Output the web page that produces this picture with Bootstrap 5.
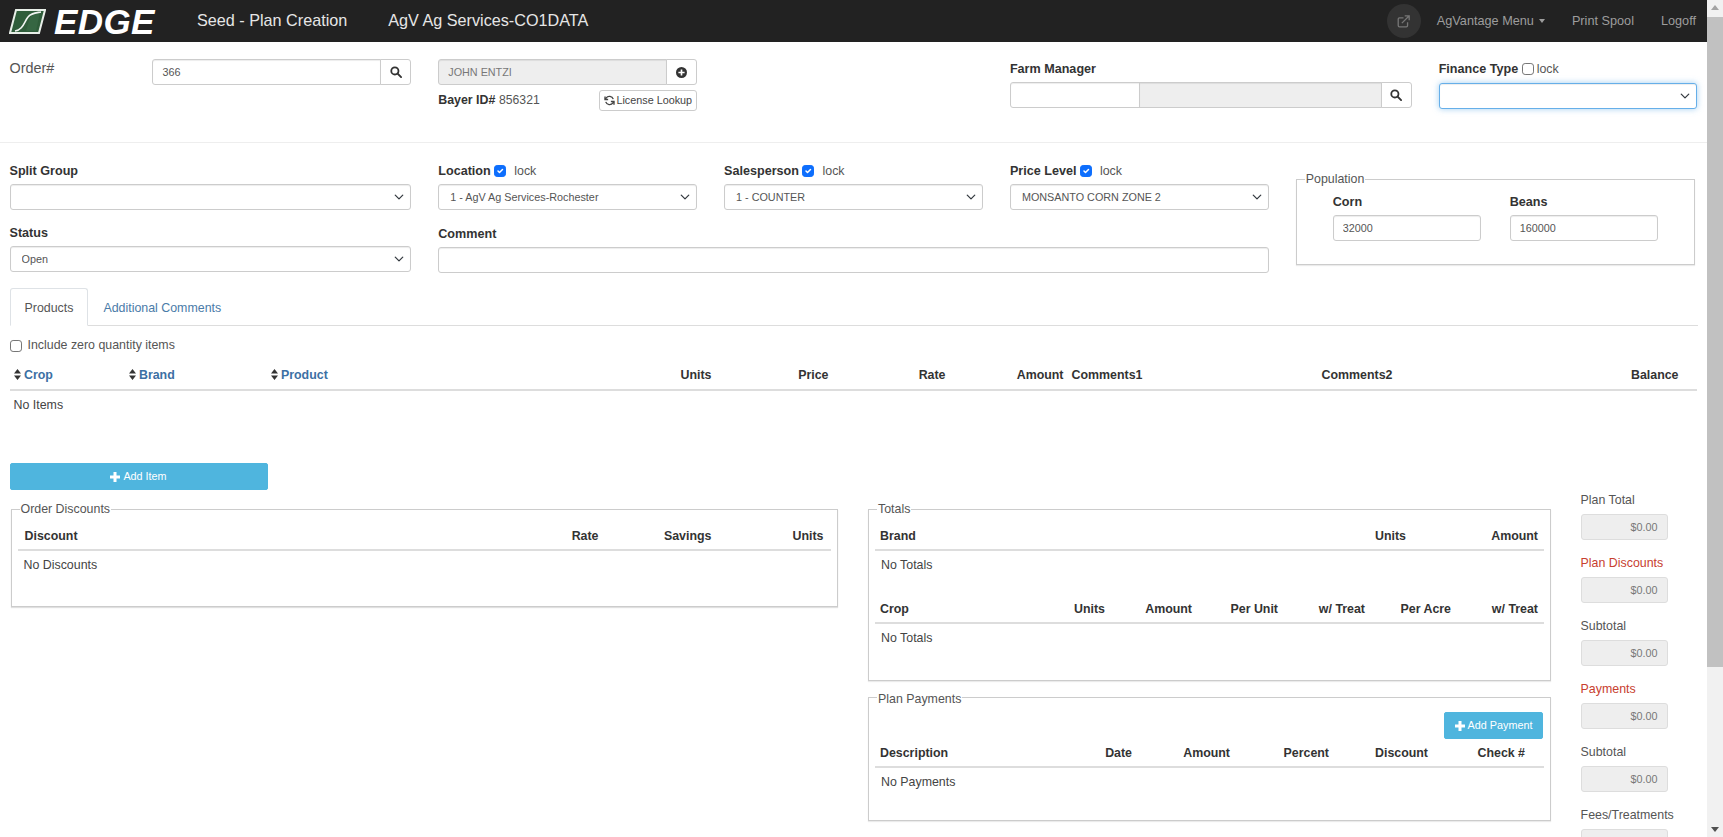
<!DOCTYPE html>
<html lang="en">
<head>
<meta charset="utf-8">
<title>Seed - Plan Creation</title>
<link rel="stylesheet" href="https://cdn.jsdelivr.net/npm/bootstrap@5.3.0/dist/css/bootstrap.min.css">
<style>
html,body{height:100%;overflow:hidden;background:#fff}
body{font-family:"Liberation Sans",Arial,sans-serif;font-size:13px;color:#333;line-height:1.3}
.shell{width:1707px;height:837px;overflow:hidden}
.topbar{height:42px;background:#222;padding:0 11px 0 9px;flex-wrap:nowrap}
.brandmark{display:flex;align-items:center;gap:8px;width:188px;padding:0;margin:0;text-decoration:none}
.brandword{font-size:35px;font-weight:700;font-style:italic;color:#fff;line-height:1;letter-spacing:.4px}
.pagetitle{font-size:16.2px;color:#e6e6e6;margin-right:41px;white-space:nowrap}
.toplink{font-size:12.7px;color:#9d9d9d;text-decoration:none;margin-left:27px;white-space:nowrap}
.toplink.first{margin-left:16px}
.extcircle{width:34px;height:34px;border-radius:50%;background:#333;display:flex;align-items:center;justify-content:center}
.caretdown{display:inline-block;width:0;height:0;border-left:3.5px solid transparent;border-right:3.5px solid transparent;border-top:4px solid #9d9d9d;margin-left:5px;vertical-align:2px}
.fakebar{position:fixed;top:0;right:0;width:16px;height:837px;background:#f1f1f1}
.fakethumb{position:absolute;top:17px;left:0;width:16px;height:650px;background:#c1c1c1}
.arrowup,.arrowdown{position:absolute;left:4px;width:0;height:0;border-left:4px solid transparent;border-right:4px solid transparent}
.arrowup{top:5px;border-bottom:5px solid #a3a3a3}
.arrowdown{bottom:5px;border-top:5px solid #505050}
.pagebody{padding:0 9.5px}
.pagebody .row{--bs-gutter-x:27px}
.blockone{height:101px;border-bottom:1px solid #eee}
.ordertag{font-size:14.4px;color:#555;margin-top:17px;line-height:18px}
.pad17{padding-top:17px}
.pad19{padding-top:19px}
.fieldname{font-weight:700;font-size:12.6px;color:#333;line-height:16px;height:16px;margin-bottom:5px;white-space:nowrap}
.fieldname .form-check-input{margin:0 3px 0 0;width:12px;height:12px;vertical-align:-2px}
.form-check-input:not(:checked){border-color:#767676}
.locktxt{font-weight:400;font-size:12.4px;color:#555;margin-left:5px}
.finance{padding-top:19px}
.finance .fieldname{margin-bottom:6px}
.form-control.fc,.form-select.fc,.btn.fb{font-size:10.8px;height:26px;min-height:26px;line-height:14px;padding:4px 9px;border-radius:3px;border-color:#ccc;color:#555;box-shadow:inset 0 1px 1px rgba(0,0,0,.075)}
.form-select.fc{padding-left:11px;background-position:right 5px center;background-size:12px 10px;color:#555}
.form-control.fc[readonly]{background:#eee;color:#777}
.btn.fb{width:31px;padding:0;display:flex;align-items:center;justify-content:center;background:#fff;box-shadow:none}
.form-select.focusring{border-color:#66afe9;box-shadow:inset 0 1px 1px rgba(0,0,0,.075),0 0 6px rgba(102,175,233,.6)}
.bayerline{display:flex;justify-content:space-between;align-items:center;margin-top:5px;height:21px}
.bayerline b{font-size:12.4px}
.bayerline span{font-size:12.2px;color:#555}
.btn.lookup{font-size:10.8px;height:21px;padding:0 4px;line-height:19px;border-color:#ccc;color:#444;border-radius:3px;display:flex;align-items:center;gap:1px;background:#fff}
.farmfix{width:130px;flex:0 0 130px!important}
.blocktwo{padding-top:20px;height:145px}
.gap16{margin-top:15px}
.gap17{margin-top:16px}
.fldbox{border:1px solid #ccc;margin:0;padding:0;position:relative;min-width:0}
.fldbox>legend{position:absolute;float:none;top:-8px;left:8px;width:auto;margin:0;padding:0 1px;font-size:12.4px;line-height:15px;background:#fff;color:#555}
.popbox{height:86px;margin-top:16px;display:flex;padding:0 36px 0 36px;gap:29px;box-shadow:0 1px 1px rgba(0,0,0,.08);width:399px}
.popfield{width:148px;padding-top:14px}
.popfield .fieldname{margin-bottom:5px}
.tabset{height:38px;border-bottom-color:#ddd;margin-top:0}
.tabset .nav-link{font-size:12.4px;padding:11px 14px 9px;height:37px;line-height:16px;color:#4a7ba8;border-radius:3px 3px 0 0}
.tabset .nav-link.active{color:#555;height:38px}
.zeroline{display:flex;align-items:center;gap:6px;height:17px;margin-top:11px;font-size:12.4px;color:#555}
.zeroline .form-check-input{margin:0;width:12px;height:12px}
.flexhead{display:flex;border-bottom:2px solid #ddd;font-weight:700;font-size:12.4px;height:24px;color:#333;line-height:16px;padding-left:4px;white-space:nowrap;position:relative}
.prodtable{margin-top:13px;width:1687px}
.sorter{color:#3c70a4}
.sorter svg{margin-right:0;vertical-align:-1px}
.abscell{position:absolute;top:0}
.emptyrow{font-size:12.4px;color:#444;padding:6px 4px;line-height:16px}
.emptyrow.insetrow{padding-left:6px;padding-right:6px}
.btn.addbtn{display:flex;align-items:center;justify-content:center;gap:3px;background:#4fb5de;border:1px solid #4fb5de;color:#fff;font-size:10.8px;border-radius:2px;padding:0;height:27px}
.additem{width:258px;margin-top:44px}
.blockthree{margin-top:19px}
.discbox{height:98px;width:827px;margin-left:1px;box-shadow:0 1px 1px rgba(0,0,0,.12);padding:18px 6px 0}
.totbox{height:172px;width:683px;margin-left:1px;padding:18px 6px 0;box-shadow:0 1px 1px rgba(0,0,0,.08)}
.paybox{height:124px;width:683px;margin:16px 0 0 1px;padding:14px 6px 0;box-shadow:0 1px 1px rgba(0,0,0,.08)}
.paybox>legend{top:-6px}
.cellhead{display:flex;font-weight:700;font-size:12.4px;height:23px;line-height:16px;border-bottom:2px solid #ddd;padding:0 6px 0 5px;white-space:nowrap;color:#333}
.cellhead.widepad{padding:0 7px}
.cellhead>span{text-align:right}
.cellhead>span:first-child{text-align:left;flex:1 1 auto}
.secondhead{margin-top:22px}
.payadd{width:99px;margin:0 1px 6px auto}
.sidetotals{width:110px;margin-top:-17px}
.sidename{font-size:12.4px;color:#555;line-height:16px;height:16px;margin-bottom:6px;white-space:nowrap}
.sidename.redname{color:#c7402f}
.sidegap{margin-left:-1px;height:63px;padding-top:0}
.form-control.sideval{width:87px;height:26px;min-height:26px;font-size:10.8px;padding:4px 9px;background:#eee;color:#777;border-color:#ddd;text-align:right;border-radius:3px}
</style>
</head>
<body>
<div class="shell">
  <nav class="navbar topbar d-flex align-items-center">
    <a class="brandmark" href="#">
      <svg width="37" height="25" viewBox="0 0 37 25"><polygon points="7,1 36,1 30,24 1,24" fill="#2f5d3a" stroke="#e8efe8" stroke-width="2"/><polygon points="8,22 17,22 21,8 28,3 31,3 27,22 17,22" fill="#3d6e49" opacity=".55"/><path d="M6 22 C14 21 15 13 19 8 C22 4 26 4 32 3" fill="none" stroke="#f2f5f2" stroke-width="1.6"/></svg>
      <span class="brandword">EDGE</span>
    </a>
    <span class="pagetitle">Seed - Plan Creation</span>
    <span class="pagetitle">AgV Ag Services-CO1DATA</span>
    <div class="ms-auto d-flex align-items-center">
      <div class="extcircle"><svg width="13" height="13" viewBox="0 0 16 16" fill="none" stroke="#777" stroke-width="1.6"><path d="M13 9v4a1.5 1.5 0 0 1-1.500 1.500H3A1.500 1.500 0 0 1 1.500 13V5A1.500 1.500 0 0 1 3 3.500h5"/><path d="M6 10 14.500 1.500M9.500 1h5.500v5.500" /></svg></div>
      <a class="toplink first" href="#">AgVantage Menu<span class="caretdown"></span></a>
      <a class="toplink" href="#">Print Spool</a>
      <a class="toplink" href="#">Logoff</a>
    </div>
  </nav>

  <div class="pagebody">
    <div class="row blockone">
      <div class="col-1"><div class="ordertag">Order#</div></div>
      <div class="col-2 pad17">
        <div class="input-group">
          <input class="form-control fc" value="366">
          <button class="btn fb" type="button"><svg width="12" height="12" viewBox="0 0 16 16" fill="none" stroke="#333" stroke-width="2.400"><circle cx="6.500" cy="6.500" r="4.800"/><path d="M10 10l4.800 4.800" stroke-linecap="round"/></svg></button>
        </div>
      </div>
      <div class="col-2 pad17">
        <div class="input-group">
          <input class="form-control fc" value="JOHN ENTZI" readonly>
          <button class="btn fb" type="button"><svg width="11" height="11" viewBox="0 0 16 16"><circle cx="8" cy="8" r="8" fill="#333"/><path d="M8 3.500v9M3.500 8h9" stroke="#fff" stroke-width="2.400"/></svg></button>
        </div>
        <div class="bayerline">
          <div><b>Bayer ID#</b> <span>856321</span></div>
          <button class="btn lookup" type="button"><svg width="11" height="11" viewBox="0 0 16 16" fill="none" stroke="#444" stroke-width="2"><path d="M13.500 6A6 6 0 0 0 3 4.500L1.500 6.500M2.500 10A6 6 0 0 0 13 11.500l1.500-2"/><path d="M1.500 2v4.500H6M14.500 14V9.500H10"/></svg>License Lookup</button>
        </div>
      </div>
      <div class="col-2"></div>
      <div class="col-3 pad19">
        <div class="fieldname">Farm Manager</div>
        <div class="input-group">
          <input class="form-control fc farmfix">
          <input class="form-control fc" readonly>
          <button class="btn fb" type="button"><svg width="12" height="12" viewBox="0 0 16 16" fill="none" stroke="#333" stroke-width="2.400"><circle cx="6.500" cy="6.500" r="4.800"/><path d="M10 10l4.800 4.800" stroke-linecap="round"/></svg></button>
        </div>
      </div>
      <div class="col-2 finance">
        <div class="fieldname">Finance Type <input class="form-check-input" type="checkbox"><span class="locktxt ms-0">lock</span></div>
        <select class="form-select fc focusring"><option></option></select>
      </div>
    </div>

    <div class="row blocktwo">
      <div class="col-3">
        <div class="fieldname">Split Group</div>
        <select class="form-select fc"><option></option></select>
        <div class="fieldname gap16">Status</div>
        <select class="form-select fc"><option>Open</option></select>
      </div>
      <div class="col-6">
        <div class="row">
          <div class="col-4">
            <div class="fieldname">Location <input class="form-check-input" type="checkbox" checked><span class="locktxt">lock</span></div>
            <select class="form-select fc"><option>1 - AgV Ag Services-Rochester</option></select>
          </div>
          <div class="col-4">
            <div class="fieldname">Salesperson <input class="form-check-input" type="checkbox" checked><span class="locktxt">lock</span></div>
            <select class="form-select fc"><option>1 - COUNTER</option></select>
          </div>
          <div class="col-4">
            <div class="fieldname">Price Level <input class="form-check-input" type="checkbox" checked><span class="locktxt">lock</span></div>
            <select class="form-select fc"><option>MONSANTO CORN ZONE 2</option></select>
          </div>
        </div>
        <div class="fieldname gap17">Comment</div>
        <input class="form-control fc">
      </div>
      <div class="col-3">
        <fieldset class="fldbox popbox">
          <legend>Population</legend>
          <div class="popfield"><div class="fieldname">Corn</div><input class="form-control fc" value="32000"></div>
          <div class="popfield"><div class="fieldname">Beans</div><input class="form-control fc" value="160000"></div>
        </fieldset>
      </div>
    </div>

    <ul class="nav nav-tabs tabset">
      <li class="nav-item"><a class="nav-link active" href="#">Products</a></li>
      <li class="nav-item"><a class="nav-link" href="#">Additional Comments</a></li>
    </ul>
    <label class="zeroline"><input class="form-check-input" type="checkbox">Include zero quantity items</label>

    <div class="prodtable">
      <div class="flexhead">
        <span class="abscell sorter" style="left:4px"><svg width="7" height="11" viewBox="0 0 7 11" fill="#333"><path d="M3.500 0 7 4.500H0zM3.500 11 0 6.500h7z"/></svg> Crop</span>
        <span class="abscell sorter" style="left:119px"><svg width="7" height="11" viewBox="0 0 7 11" fill="#333"><path d="M3.500 0 7 4.500H0zM3.500 11 0 6.500h7z"/></svg> Brand</span>
        <span class="abscell sorter" style="left:261px"><svg width="7" height="11" viewBox="0 0 7 11" fill="#333"><path d="M3.500 0 7 4.500H0zM3.500 11 0 6.500h7z"/></svg> Product</span>
        <span class="abscell" style="right:985px">Units</span>
        <span class="abscell" style="right:868px">Price</span>
        <span class="abscell" style="right:751px">Rate</span>
        <span class="abscell" style="right:633px">Amount</span>
        <span class="abscell" style="left:1062px">Comments1</span>
        <span class="abscell" style="left:1312px">Comments2</span>
        <span class="abscell" style="right:18px">Balance</span>
      </div>
      <div class="emptyrow">No Items</div>
    </div>

    <button class="btn addbtn additem" type="button"><svg width="10" height="10" viewBox="0 0 10 10"><path d="M5 0v10M0 5h10" stroke="#fff" stroke-width="3"/></svg>Add Item</button>

    <div class="row blockthree">
      <div class="col-6">
        <fieldset class="fldbox discbox">
          <legend>Order Discounts</legend>
          <div class="cellhead widepad"><span>Discount</span><span style="width:70px">Rate</span><span style="width:113px">Savings</span><span style="width:112px">Units</span></div>
          <div class="emptyrow insetrow">No Discounts</div>
        </fieldset>
      </div>
      <div class="col-5">
        <fieldset class="fldbox totbox">
          <legend>Totals</legend>
          <div class="cellhead"><span>Brand</span><span style="width:80px">Units</span><span style="width:132px">Amount</span></div>
          <div class="emptyrow insetrow">No Totals</div>
          <div class="cellhead secondhead"><span>Crop</span><span style="width:80px">Units</span><span style="width:87px">Amount</span><span style="width:86px">Per Unit</span><span style="width:87px">w/ Treat</span><span style="width:86px">Per Acre</span><span style="width:87px">w/ Treat</span></div>
          <div class="emptyrow insetrow">No Totals</div>
        </fieldset>
        <fieldset class="fldbox paybox">
          <legend>Plan Payments</legend>
          <button class="btn addbtn payadd" type="button"><svg width="10" height="10" viewBox="0 0 10 10"><path d="M5 0v10M0 5h10" stroke="#fff" stroke-width="3"/></svg>Add Payment</button>
          <div class="cellhead"><span>Description</span><span style="width:100px">Date</span><span style="width:98px">Amount</span><span style="width:99px">Percent</span><span style="width:99px">Discount</span><span style="width:97px">Check #</span><span style="width:13px"></span></div>
          <div class="emptyrow insetrow">No Payments</div>
        </fieldset>
      </div>
      <div class="col-1">
        <div class="sidetotals">
          <div class="sidegap"><div class="sidename">Plan Total</div><input class="form-control sideval" value="$0.00" readonly></div>
          <div class="sidegap"><div class="sidename redname">Plan Discounts</div><input class="form-control sideval" value="$0.00" readonly></div>
          <div class="sidegap"><div class="sidename">Subtotal</div><input class="form-control sideval" value="$0.00" readonly></div>
          <div class="sidegap"><div class="sidename redname">Payments</div><input class="form-control sideval" value="$0.00" readonly></div>
          <div class="sidegap"><div class="sidename">Subtotal</div><input class="form-control sideval" value="$0.00" readonly></div>
          <div class="sidegap"><div class="sidename">Fees/Treatments</div><input class="form-control sideval" value="$0.00" readonly></div>
        </div>
      </div>
    </div>
  </div>
</div>
<div class="fakebar"><span class="arrowup"></span><div class="fakethumb"></div><span class="arrowdown"></span></div>
<script src="https://cdn.jsdelivr.net/npm/bootstrap@5.3.0/dist/js/bootstrap.bundle.min.js"></script>
</body>
</html>
